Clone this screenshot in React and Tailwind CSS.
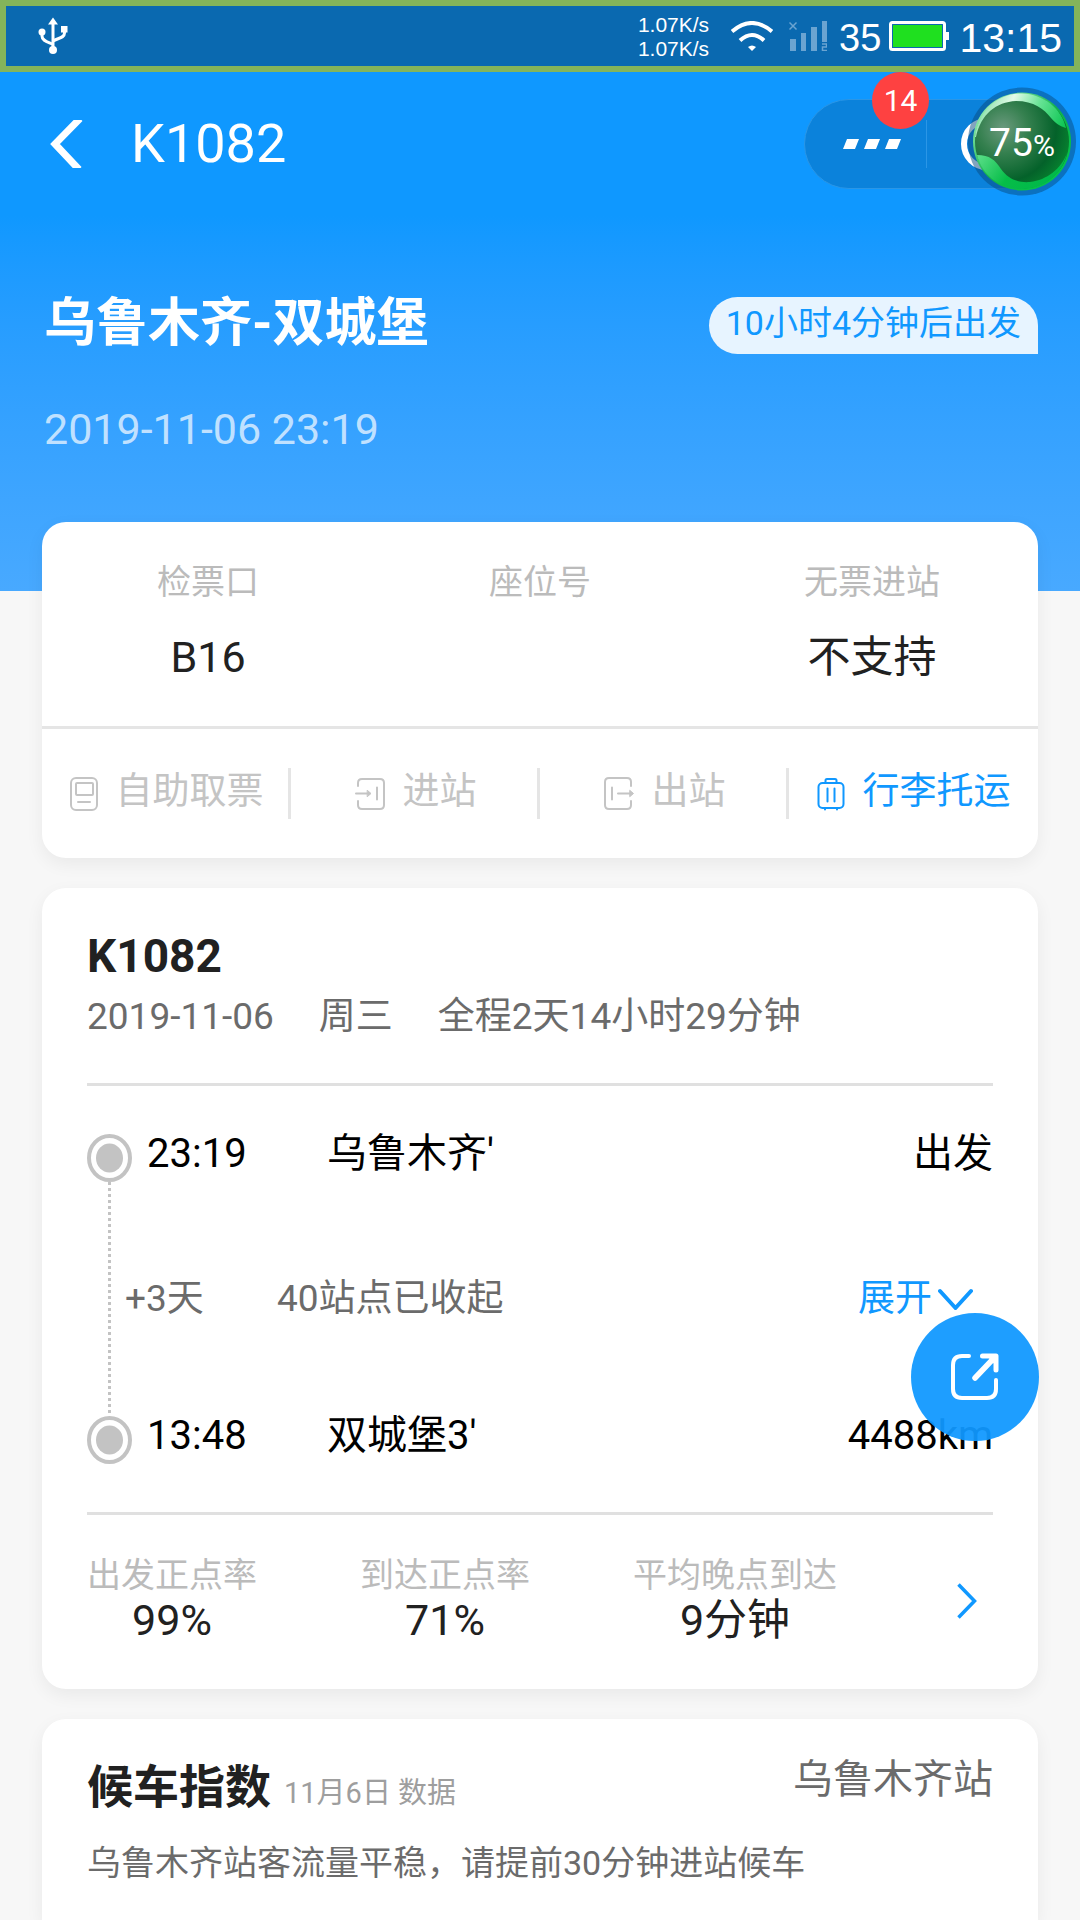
const FONT = "font-[Roboto,'Noto_Sans_CJK_SC',sans-serif]";

function UsbIcon() {
  return (
    <svg width="30" height="38" viewBox="0 0 30 38" fill="none" stroke="#fff" strokeWidth="3" aria-hidden="true">
      <path d="M15 4V33" />
      <path d="M4 14V19C4 24 10 25 15 27.500" />
      <path d="M26.500 12V16C26.500 21 20 21 15 24" />
      <path d="M15 .5L20 7.500H10Z" fill="#fff" stroke="none" />
      <circle cx="4" cy="15" r="3.500" fill="#fff" stroke="none" />
      <rect x="23" y="9" width="6.500" height="6.500" fill="#fff" stroke="none" />
      <circle cx="15" cy="33" r="4" fill="#fff" stroke="none" />
    </svg>
  );
}

function WifiIcon() {
  return (
    <svg width="42" height="30" viewBox="0 0 42 30" fill="none" stroke="#fff" strokeWidth="4" aria-hidden="true">
      <path d="M1 10.500Q21 -6.500 41 10.500" />
      <path d="M9 19.500Q21 8.500 33 19.500" />
      <path d="M17 26Q21 23 25 26L21 30Z" fill="#fff" stroke="none" />
    </svg>
  );
}

function SignalIcon() {
  return (
    <svg width="38" height="30" viewBox="0 0 38 30" fill="#6ba4d1" aria-hidden="true">
      <rect x="1" y="18" width="6" height="12" />
      <rect x="12" y="12" width="5" height="18" />
      <rect x="22" y="6" width="6" height="24" />
      <rect x="33" y="0" width="5" height="21" />
      <path d="M.5 1.500L7.500 8.500M7.500 1.500L.5 8.500M33 23H37.500V26H33.500V29.500H38" fill="none" stroke="#6ba4d1" strokeWidth="1.500" />
    </svg>
  );
}

function BatteryIcon() {
  return (
    <svg width="60" height="30" viewBox="0 0 60 30" aria-hidden="true">
      <rect x="1.500" y="1.500" width="54" height="27" rx="2" fill="none" stroke="#fff" strokeWidth="3" />
      <rect x="4" y="4" width="49" height="22" fill="#1fe01f" />
      <rect x="57" y="11" width="3" height="8" fill="#fff" />
    </svg>
  );
}

function StatusBar() {
  return (
    <div className="flex h-[72px] items-center justify-between border-[6px] border-[#84b45a] bg-[#0a69b0] pl-8 pr-3 font-['Liberation_Sans',sans-serif] text-white">
      <UsbIcon />
      <div className="flex items-center">
        <div className="mr-[22px] pt-0.5 text-[21px] leading-6">
          <div>1.07K/s</div>
          <div>1.07K/s</div>
        </div>
        <WifiIcon />
        <span className="w-4" />
        <SignalIcon />
        <span className="ml-3 mr-2 pt-1 text-[38px] leading-none">35</span>
        <BatteryIcon />
        <span className="ml-2.5 pt-1 text-[41px] leading-none">13:15</span>
      </div>
    </div>
  );
}

function MemoryBall() {
  return (
    <div className="absolute -right-7 -top-3 size-[108px]">
      <svg className="absolute inset-0" width="108" height="109" viewBox="0 0 108 109" aria-hidden="true">
        <defs>
          <radialGradient id="glass" cx="0.3" cy="0.36" r="0.75">
            <stop offset="0" stopColor="#6b9a7e" />
            <stop offset="0.35" stopColor="#35804f" />
            <stop offset="0.75" stopColor="#04622a" />
            <stop offset="1" stopColor="#07832f" />
          </radialGradient>
          <linearGradient id="rim" x1="0" y1="0" x2="1" y2="1">
            <stop offset="0" stopColor="#b9ffd0" />
            <stop offset="0.5" stopColor="#12b24a" />
            <stop offset="1" stopColor="#00c94a" />
          </linearGradient>
          <linearGradient id="topWave" x1="0" y1="0.4" x2="1" y2="0.6">
            <stop offset="0" stopColor="#7fdca0" />
            <stop offset="0.35" stopColor="#e2fbe9" />
            <stop offset="0.65" stopColor="#66e394" />
            <stop offset="1" stopColor="#10c655" />
          </linearGradient>
          <linearGradient id="lowWave" x1="0" y1="0" x2="1" y2="0.3">
            <stop offset="0" stopColor="#5fe08c" />
            <stop offset="0.5" stopColor="#06bd48" />
            <stop offset="1" stopColor="#00b84a" />
          </linearGradient>
        </defs>
        <circle cx="54" cy="54.500" r="54" fill="#074a80" fillOpacity="0.5" />
        <circle cx="54" cy="54.500" r="49" fill="url(#rim)" />
        <circle cx="54" cy="54.500" r="47" fill="url(#glass)" />
        <path d="M7 50C10 24 30 6 54 6.500C76 7 94 22 98 41C92 39 88 37 83 31C76 22 66 14 48 14C28 15 13 27 8 50Z" fill="url(#topWave)" />
        <path d="M9 68C22 68 27 73 33 82C40 92 50 96 62 95C79 93 93 82 99 66C94 88 76 102 54 102C33 102 14 89 9 68Z" fill="url(#lowWave)" />
      </svg>
      <span className="relative flex h-full items-baseline justify-center pt-[33px] text-[39px] leading-[46px] text-white">
        75<span className="text-[30px]">%</span>
      </span>
    </div>
  );
}

function NavBar() {
  return (
    <nav className="flex h-36 items-center pl-11 pr-8">
      <button type="button" aria-label="返回" className="p-1">
        <svg width="36" height="48" viewBox="0 0 36 48" fill="none" stroke="#fff" strokeWidth="7" aria-hidden="true">
          <path d="M32 -1.500L7 24L31 49.500" />
        </svg>
      </button>
      <h1 className="ml-[43px] text-[54px] leading-[64px] text-white">K1082</h1>
      <div className="relative ml-auto h-[90px] w-[244px]">
        <div className="flex h-full items-center rounded-full border border-[#2b96e6] bg-[#0b82db]">
          <button type="button" aria-label="更多" className="flex h-full w-[121px] items-center justify-center pl-3">
            <svg width="58" height="10" viewBox="0 0 58 10" fill="#fff" aria-hidden="true">
              <path d="M4 0H16L12 10H0Z" />
              <path d="M25 0H37L33 10H21Z" />
              <path d="M46 0H58L54 10H42Z" />
            </svg>
          </button>
          <span className="h-12 w-px bg-[#2b96e6]" />
          <button type="button" aria-label="关闭" className="flex h-full flex-1 items-center justify-center">
            <span className="size-[52px] rounded-full border-[6px] border-white" />
          </button>
        </div>
        <span className="absolute -top-[27px] left-[68px] flex size-[57px] items-center justify-center rounded-full bg-[#fe4141] text-[30px] leading-none text-white">
          14
        </span>
        <MemoryBall />
      </div>
    </nav>
  );
}

function KioskIcon() {
  return (
    <svg width="28" height="34" viewBox="0 0 28 34" fill="none" stroke="currentColor" strokeWidth="2" strokeLinecap="round" aria-hidden="true">
      <rect x="1" y="1" width="26" height="32" rx="5" />
      <rect x="6" y="6" width="17" height="12" rx="1" />
      <path d="M8 25H20" />
    </svg>
  );
}

function EnterIcon() {
  return (
    <svg width="30" height="34" viewBox="0 0 30 34" fill="none" stroke="currentColor" strokeWidth="2" strokeLinecap="round" aria-hidden="true">
      <path d="M3 9V6Q3 2 7 2H25Q29 2 29 6V28Q29 32 25 32H7Q3 32 3 28V24" />
      <path d="M1 16.500H13M22 10.500V22.500" />
      <path d="M12.500 13.500L16 16.500L12.500 19.500Z" fill="currentColor" strokeWidth="1" />
    </svg>
  );
}

function ExitIcon() {
  return (
    <svg width="30" height="34" viewBox="0 0 30 34" fill="none" stroke="currentColor" strokeWidth="2" strokeLinecap="round" aria-hidden="true">
      <path d="M27 9V5Q27 1 23 1H5Q1 1 1 5V28Q1 32 5 32H23Q27 32 27 28V24" />
      <path d="M14 16.500H26M8 10.500V22.500" />
      <path d="M26 13.500L29.500 16.500L26 19.500Z" fill="currentColor" strokeWidth="1" />
    </svg>
  );
}

function LuggageIcon() {
  return (
    <svg width="28" height="34" viewBox="0 0 28 34" fill="none" stroke="currentColor" strokeWidth="2" strokeLinecap="round" aria-hidden="true">
      <rect x="1.500" y="6" width="25" height="25" rx="4" />
      <path d="M8.500 6V3.500Q8.500 2 10 2H18Q19.500 2 19.500 3.500V6" />
      <path d="M10.500 11.500V24.500M17.500 11.500V24.500M8 32V32.500M20 32V32.500" />
    </svg>
  );
}

const CARD = "bg-white shadow-[0_6px_18px_rgba(0,0,0,0.06)]";

const facts = [
  { label: "检票口", value: "B16" },
  { label: "座位号", value: "" },
  { label: "无票进站", value: "不支持" },
];

function Action({ Icon, label, active }) {
  return (
    <button
      type="button"
      disabled={!active}
      className={`flex flex-1 items-center justify-center gap-[18px] ${active ? "text-[#1098ff]" : "text-[#c4c4c4]"}`}
    >
      <Icon />
      <span className="pb-1 text-[37px] leading-[46px]">{label}</span>
    </button>
  );
}

function Separator() {
  return <span className="-ml-[3px] h-[51px] w-[3px] bg-[#e5e5e5]" />;
}

function FactsCard() {
  return (
    <section className={`rounded-3xl ${CARD}`}>
      <dl className="grid grid-cols-3 border-b-[3px] border-[#e5e5e5] pb-[39px] pt-9 text-center">
        {facts.map((f) => (
          <div key={f.label}>
            <dt className="text-[34px] leading-[48px] text-[#bbb]">{f.label}</dt>
            <dd className="mt-[21px] h-[60px] text-[43px] leading-[60px] text-[#212121]">{f.value}</dd>
          </div>
        ))}
      </dl>
      <div className="flex h-[129px] items-center">
        <Action Icon={KioskIcon} label="自助取票" />
        <Separator />
        <Action Icon={EnterIcon} label="进站" />
        <Separator />
        <Action Icon={ExitIcon} label="出站" />
        <Separator />
        <Action Icon={LuggageIcon} label="行李托运" active />
      </div>
    </section>
  );
}

function StationDot() {
  return (
    <svg width="45" height="48" viewBox="0 0 45 48" fill="none" aria-hidden="true">
      <ellipse cx="22.500" cy="24" rx="20.500" ry="22" stroke="#c3c3c3" strokeWidth="4" />
      <ellipse cx="22.500" cy="24" rx="13.500" ry="14.500" fill="#c3c3c3" />
    </svg>
  );
}

function StopRow({ time, name, note, className }) {
  return (
    <li className={`flex pl-[22px] text-[40px] leading-[39px] text-black ${className}`}>
      <span className="w-[180px]">{time}</span>
      <span className="flex-1">{name}</span>
      <span>{note}</span>
    </li>
  );
}

const stats = [
  { label: "出发正点率", value: "99%" },
  { label: "到达正点率", value: "71%" },
  { label: "平均晚点到达", value: "9分钟" },
];

function TrainCard() {
  return (
    <section className={`rounded-3xl px-[45px] ${CARD}`}>
      <header className="border-b-[3px] border-[#e0e0e0] pb-9 pt-[38px]">
        <h2 className="text-[46px] font-bold leading-[60px] text-[#212121]">K1082</h2>
        <p className="flex gap-[45px] pt-px text-[37px] leading-[60px] text-[#6b6b6b]">
          <span>2019-11-06</span>
          <span>周三</span>
          <span>全程2天14小时29分钟</span>
        </p>
      </header>
      <div className="flex border-b-[3px] border-[#e0e0e0] py-12">
        <div className="flex flex-col items-center">
          <StationDot />
          <span className="w-[3px] flex-1 bg-[repeating-linear-gradient(to_bottom,#c3c3c3_0_3px,transparent_3px_6px)]" />
          <StationDot />
        </div>
        <ol className="-ml-[7px] flex-1 pb-[9px]">
          <StopRow time="23:19" name="乌鲁木齐'" note="出发" className="" />
          <li className="mt-[106px] flex items-center text-[37px] leading-[39px] text-[#6b6b6b]">
            <span className="w-[152px]">+3天</span>
            <span className="flex-1">40站点已收起</span>
            <button type="button" className="mr-5 flex items-center gap-1.5 text-[#1098ff]">
              展开
              <svg width="35" height="22" viewBox="0 0 35 22" fill="none" stroke="currentColor" strokeWidth="4" strokeLinecap="round" strokeLinejoin="round" aria-hidden="true">
                <path d="M2 3L17.500 20L33 3" />
              </svg>
            </button>
          </li>
          <StopRow time="13:48" name="双城堡3'" note="4488km" className="mt-[98px]" />
        </ol>
      </div>
      <div className="flex items-center gap-[103px] pb-[46px] pt-[38px] text-center">
        {stats.map((s) => (
          <dl key={s.label}>
            <dt className="text-[34px] leading-[44px] text-[#bbb]">{s.label}</dt>
            <dd className="text-[43px] leading-[46px] text-[#212121]">{s.value}</dd>
          </dl>
        ))}
        <button type="button" aria-label="查看正晚点详情" className="flex flex-1 justify-center pt-1.5">
          <svg width="20" height="36" viewBox="0 0 20 36" fill="none" stroke="#1098ff" strokeWidth="3.500" aria-hidden="true">
            <path d="M1.500 1.500L17.500 18L1.500 34.500" />
          </svg>
        </button>
      </div>
    </section>
  );
}

function WaitingCard() {
  return (
    <section className={`flex-1 rounded-t-3xl px-[45px] pt-[38px] ${CARD}`}>
      <div className="flex items-start justify-between">
        <div className="flex items-baseline gap-[13px]">
          <h2 className="text-[46px] font-bold leading-[60px] text-[#212121]">候车指数</h2>
          <span className="text-[29px] leading-[60px] text-[#9e9e9e]">11月6日 数据</span>
        </div>
        <span className="text-[40px] leading-[46px] text-[#6b6b6b]">乌鲁木齐站</span>
      </div>
      <p className="mt-4 text-[34px] leading-[48px] text-[#6b6b6b]">
        乌鲁木齐站客流量平稳，请提前30分钟进站候车
      </p>
    </section>
  );
}

export default function App() {
  return (
    <div lang="zh-CN" className={`flex min-h-screen flex-col bg-[#f7f7f7] ${FONT}`}>
      <StatusBar />
      <div className="bg-[#0f98ff]">
        <NavBar />
        <div className="bg-linear-to-b from-[#0f98ff] to-[#48a9ff] pb-[132px] pl-11 pr-[42px] pt-[81px]">
          <div className="flex items-start justify-between">
            <h2 className="text-[52px] font-bold leading-[53px] text-white">乌鲁木齐-双城堡</h2>
            <span className="rounded-full rounded-br-none bg-[#e7f4ff] px-[17px] pb-1 text-[34px] leading-[53px] text-[#1098ff]">
              10小时4分钟后出发
            </span>
          </div>
          <p className="mt-[45px] text-[43px] leading-[60px] text-white/70">2019-11-06 23:19</p>
        </div>
      </div>
      <main className="-mt-[69px] flex flex-1 flex-col gap-[30px] px-[42px]">
        <FactsCard />
        <TrainCard />
        <WaitingCard />
      </main>
      <button
        type="button"
        aria-label="分享"
        className="fixed bottom-[479px] right-[41px] flex size-32 items-center justify-center rounded-full bg-[#1098ff]/94"
      >
        <svg width="48" height="48" viewBox="0 0 48 48" fill="none" stroke="#fff" strokeWidth="4" strokeLinecap="round" aria-hidden="true">
          <path d="M18 3H11Q2 3 2 12V36Q2 45 11 45H36Q45 45 45 36V27" />
          <path d="M24 25L43 5" strokeWidth="5.500" />
          <path d="M31.500 3H45V17" strokeWidth="5" strokeLinejoin="round" />
          <path d="M36 3H46V14Z" fill="#fff" stroke="none" />
        </svg>
      </button>
    </div>
  );
}
